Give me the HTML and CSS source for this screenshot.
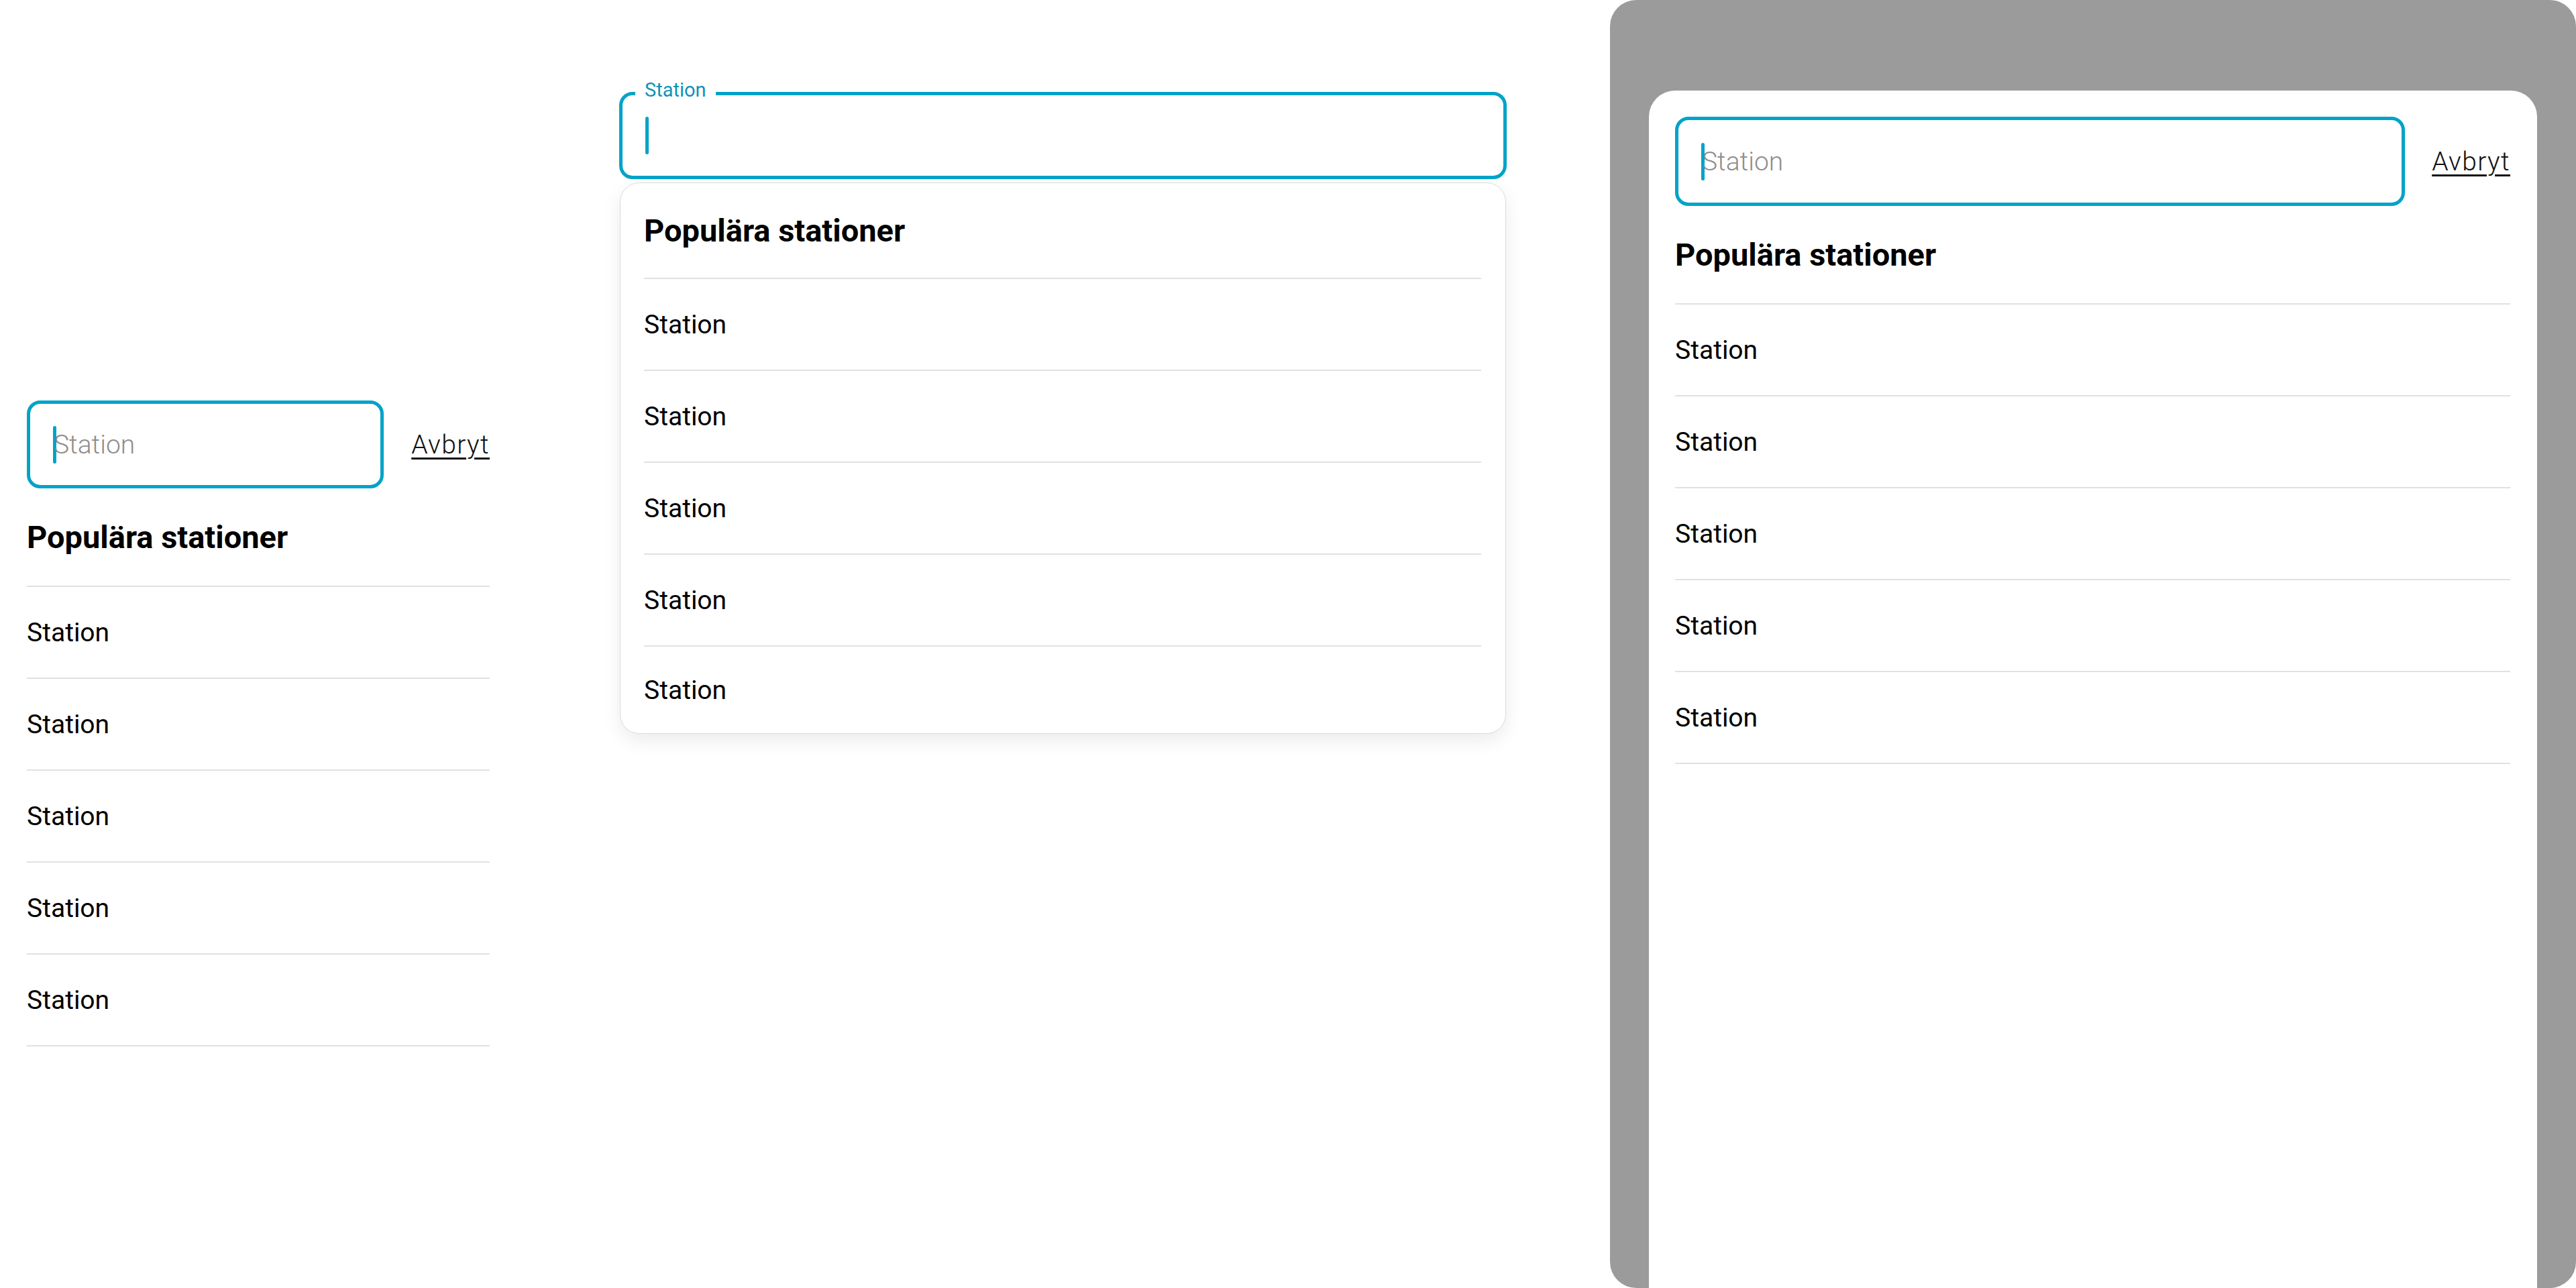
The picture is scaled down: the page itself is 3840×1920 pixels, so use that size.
FILE: index.html
```html
<!DOCTYPE html>
<html lang="sv">
<head>
<meta charset="utf-8">
<title>Stationssök</title>
<link rel="stylesheet" href="styles.css">
</head>
<body>
<main class="page">
  <section class="col col-mobile">
    <div class="search-row">
      <div class="search-input"><span class="caret"></span><span class="placeholder">Station</span></div>
      <a class="cancel" href="#">Avbryt</a>
    </div>
    <h2 class="list-heading">Populära stationer</h2>
    <ul class="station-list">
      <li class="station">Station</li>
      <li class="station">Station</li>
      <li class="station">Station</li>
      <li class="station">Station</li>
      <li class="station">Station</li>
    </ul>
  </section>

  <section class="col col-desktop">
    <div class="field">
      <span class="field-label">Station</span>
      <span class="caret"></span>
    </div>
    <div class="dropdown">
      <h2 class="list-heading list-heading--dropdown">Populära stationer</h2>
      <ul class="station-list">
        <li class="station">Station</li>
        <li class="station">Station</li>
        <li class="station">Station</li>
        <li class="station">Station</li>
        <li class="station">Station</li>
      </ul>
    </div>
  </section>

  <section class="col col-tablet">
    <div class="sheet">
      <div class="search-row">
        <div class="search-input search-input--sheet"><span class="caret"></span><span class="placeholder">Station</span></div>
        <a class="cancel" href="#">Avbryt</a>
      </div>
      <h2 class="list-heading">Populära stationer</h2>
      <ul class="station-list">
        <li class="station">Station</li>
        <li class="station">Station</li>
        <li class="station">Station</li>
        <li class="station">Station</li>
        <li class="station">Station</li>
      </ul>
    </div>
  </section>
</main>
</body>
</html>
```

FILE: styles.css
```css
* { box-sizing: border-box; }

html, body {
  margin: 0;
  padding: 0;
  width: 3840px;
  height: 1920px;
  overflow: hidden;
  background: #ffffff;
  font-family: Roboto, "Liberation Sans", sans-serif;
  color: #111111;
}

.page {
  display: flex;
  align-items: flex-start;
  width: 3840px;
  height: 1920px;
}

/* ---------- columns ---------- */
.col-mobile {
  width: 690px;
  margin-left: 40px;
  margin-top: 597px;
}

.col-desktop {
  width: 1323px;
  margin-left: 193px;
  margin-top: 137px;
}

.col-tablet {
  width: 1440px;
  height: 1920px;
  margin-left: 154px;
  background: #9b9b9b;
  border-radius: 39px;
  padding: 135px 58px 0 58px;
  overflow: hidden;
  display: flex;
  flex-direction: column;
}

/* ---------- search row ---------- */
.search-row {
  display: flex;
  align-items: center;
  gap: 41px;
}

.search-input {
  flex: 1;
  height: 131px;
  border: 5px solid #00a3c8;
  border-radius: 20px;
  display: flex;
  align-items: center;
  padding-left: 34px;
}

.search-input--sheet {
  height: 133px;
}

.caret {
  display: block;
  width: 5px;
  height: 56px;
  border-radius: 3px;
  background: #00a3c8;
  flex: none;
}

.placeholder {
  font-size: 39px;
  font-weight: 300;
  color: #8e8e8e;
  margin-left: -4px;
}

.cancel {
  font-size: 39px;
  font-weight: 300;
  color: #111111;
  text-decoration: underline;
  text-decoration-thickness: 3px;
  text-underline-offset: 6px;
  letter-spacing: 1.4px;
}

/* ---------- lists ---------- */
.list-heading {
  margin: 0;
  height: 147px;
  display: flex;
  align-items: center;
  font-size: 47px;
  font-weight: 700;
  color: #000000;
  border-bottom: 2px solid #e1e1e1;
}

.station-list {
  list-style: none;
  margin: 0;
  padding: 0;
}

.station {
  height: 137px;
  display: flex;
  align-items: center;
  font-size: 39px;
  font-weight: 400;
  color: #000000;
  border-bottom: 2px solid #e1e1e1;
}

/* ---------- floating label field ---------- */
.field {
  position: relative;
  height: 130px;
  border: 5px solid #00a3c8;
  border-radius: 20px;
  display: flex;
  align-items: center;
  padding-left: 34px;
}

.field-label {
  position: absolute;
  left: 19px;
  top: -25px;
  padding: 0 14px;
  background: #ffffff;
  font-size: 29px;
  line-height: 34px;
  color: #0e93b6;
}

.dropdown {
  margin-top: 5px;
  margin-left: 1px;
  width: 1321px;
  background: #ffffff;
  border: 1px solid #dcdcdc;
  border-radius: 29px;
  box-shadow: 0 10px 28px rgba(0, 0, 0, 0.08);
  padding: 0 36px 0 35px;
}

.list-heading--dropdown {
  height: 143px;
}

.dropdown .station:last-child {
  border-bottom: none;
  height: 129px;
}

/* ---------- tablet sheet ---------- */
.sheet {
  flex: 1;
  background: #ffffff;
  border-radius: 39px 39px 0 0;
  padding: 39px 40px 0 39px;
}

.sheet .search-row {
  gap: 40px;
}

.sheet .list-heading {
  height: 147px;
}
```
